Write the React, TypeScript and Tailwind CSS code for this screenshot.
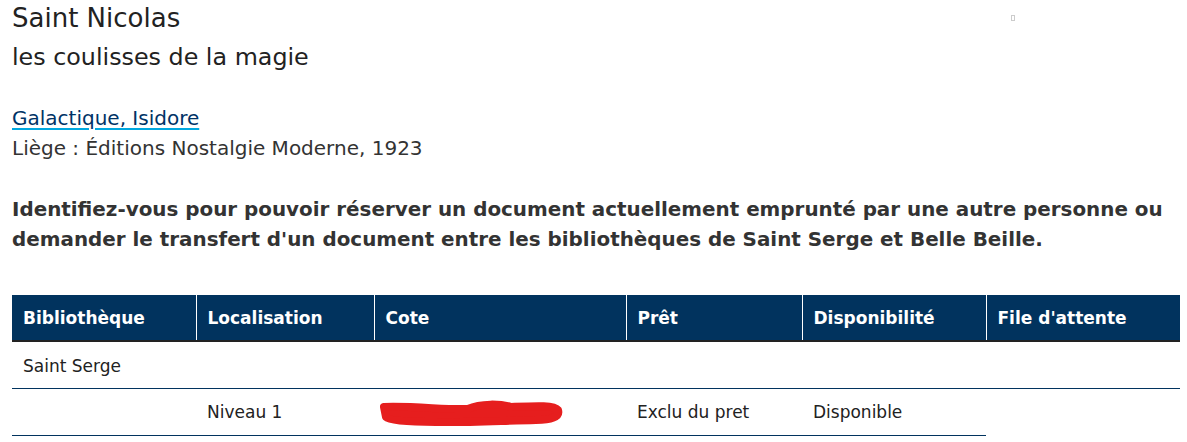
import React from 'react';

const columns = ['Bibliothèque', 'Localisation', 'Cote', 'Prêt', 'Disponibilité', "File d'attente"];

const App: React.FC = () => {
  return (
    <div className="bg-white min-h-screen px-3 text-[#333] font-['DejaVu_Sans',Verdana,sans-serif]">
      <div className="relative">
        <h1 className="text-[26px] leading-[36px] text-[#222]">Saint Nicolas</h1>
        <h2 className="mt-[3px] text-[23.8px] leading-[36px] text-[#222]">les coulisses de la magie</h2>
        {/* tiny placeholder box top right */}
        <span className="absolute left-[999px] top-[15px] w-[4px] h-[6px] border border-[#ccc]" />
      </div>

      <div className="mt-[28px] text-[20px] leading-[30px]">
        <a href="#" className="text-[#003366] underline decoration-[#00a8e0] decoration-2 underline-offset-[3px]">
          Galactique, Isidore
        </a>
        <p>Liège : Éditions Nostalgie Moderne, 1923</p>
      </div>

      <p className="mt-[32px] text-[19.9px] leading-[30px] font-bold text-[#333]">
        Identifiez-vous pour pouvoir réserver un document actuellement emprunté par une autre personne ou demander le
        transfert d'un document entre les bibliothèques de Saint Serge et Belle Beille.
      </p>

      <table className="mt-[40px] w-[1168px] border-collapse text-[17px] table-fixed">
        <colgroup>
          <col className="w-[184px]" />
          <col className="w-[178px]" />
          <col className="w-[252px]" />
          <col className="w-[176px]" />
          <col className="w-[184px]" />
          <col className="w-[194px]" />
        </colgroup>
        <thead>
          <tr className="bg-[#01335e] border-b-2 border-[#222]">
            {columns.map((c, i) => (
              <th
                key={c}
                className={`h-[46px] px-[11px] pt-[2px] text-left font-bold text-white ${i > 0 ? 'border-l border-white' : ''}`}
              >
                {c}
              </th>
            ))}
          </tr>
        </thead>
        <tbody>
          <tr className="border-b border-[#01335e]">
            <td className="h-[47px] px-[11px] pt-[4px] text-[#222]" colSpan={6}>
              Saint Serge
            </td>
          </tr>
          <tr>
            <td className="h-[47px] px-[11px] border-b border-[#01335e]" />
            <td className="h-[47px] px-[11px] pt-[2px] border-b border-[#01335e] text-[#222]">Niveau 1</td>
            <td className="h-[47px] px-[2px] border-b border-[#01335e]">
              <svg width="190" height="28" viewBox="0 0 190 28" className="block">
                <path
                  d="M8 9 C40 8 70 12 92 11 C105 5 125 6 135 9 C160 8 178 7 182 12 C184 19 175 22 160 22 C120 23 90 25 60 24 C35 24 14 23 10 19 Z"
                  fill="#e61e1e"
                  stroke="#e61e1e"
                  strokeWidth="8"
                  strokeLinecap="round"
                  strokeLinejoin="round"
                />
              </svg>
            </td>
            <td className="h-[47px] px-[11px] pt-[2px] border-b border-[#01335e] text-[#222]">Exclu du pret</td>
            <td className="h-[47px] px-[11px] pt-[2px] border-b border-[#01335e] text-[#222]">Disponible</td>
            <td className="h-[47px] px-[11px]" />
          </tr>
        </tbody>
      </table>
    </div>
  );
};

export default App;
